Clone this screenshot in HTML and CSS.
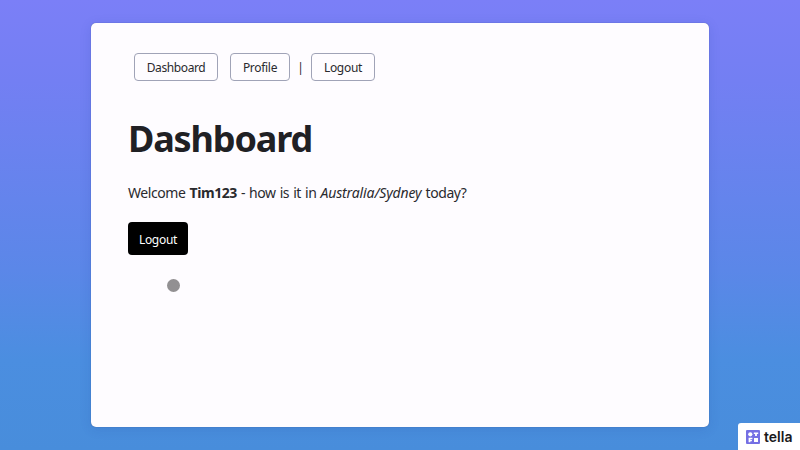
FILE: index.html
```html
<!DOCTYPE html>
<html lang="en">
<head>
<meta charset="utf-8">
<title>Dashboard</title>
<link rel="stylesheet" href="styles.css">
</head>
<body>
<main class="window">
  <nav class="nav">
    <a class="nav-link dashboard">Dashboard</a>
    <a class="nav-link profile">Profile</a>
    <span class="divider">|</span>
    <a class="nav-link logout">Logout</a>
  </nav>
  <h1>Dashboard</h1>
  <p class="welcome">Welcome <strong>Tim123</strong> - how is it in <em>Australia/Sydney</em> today?</p>
  <button class="button">Logout</button>
</main>
<div class="cursor"></div>
<div class="badge">
  <svg class="badge-icon" viewBox="0 0 14 14" aria-hidden="true">
    <rect width="14" height="14" rx="1" fill="#746fe4"/>
    <g fill="#fff">
      <circle cx="4.3" cy="4.3" r="2.1"/>
      <path d="M7.8 2.4h4.4v1.6h-1.3v2h-1.8V4H7.8zM2.6 7.8h3.8v1.5h-2v.8h1.5v1.2H4.4v1H2.6zM8 8h4v4H8z"/>
    </g>
  </svg>
  <span class="badge-name">tella</span>
</div>
</body>
</html>
```
FILE: styles.css
```css
* { box-sizing: border-box; }
body {
  margin: 0;
  height: 450px;
  overflow: hidden;
  padding: 23px 91px;
  background: linear-gradient(#7b7ff7 0%, #737ff3 18%, #5b87e8 60%, #4b8ee0 80%, #488ddb 100%);
  font-family: "Noto Sans", sans-serif;
  color: #2a2a2e;
}
.window {
  height: 404px;
  width: 618px;
  padding: 30px 37px;
  background: #fefcff;
  border-radius: 5px;
  box-shadow: 0 0 1px #34528c, 0 2px 12px rgba(30, 60, 150, .14);
}
.nav {
  display: flex;
  align-items: center;
  height: 28px;
  margin-left: 6px;
  font-size: 12px;
}
.nav-link {
  height: 28px;
  line-height: 27px;
  border: 1px solid #a0a3b7;
  border-radius: 4px;
  text-align: center;
  white-space: nowrap;
  letter-spacing: -.3px;
}
.dashboard { width: 84px; letter-spacing: -.4px; }
.profile { width: 60px; margin-left: 12px; }
.divider { width: 21px; text-align: center; }
.logout { width: 64px; }
h1 {
  margin: 33px 0 0;
  height: 50px;
  line-height: 50px;
  font-size: 36px;
  font-weight: 700;
  letter-spacing: -1.15px;
  color: #202024;
}
.welcome {
  margin: 19px 0 0;
  height: 20px;
  line-height: 20px;
  font-size: 14px;
  letter-spacing: -.42px;
  word-spacing: .8px;
  white-space: nowrap;
}
.welcome em { letter-spacing: -.13px; }
.button {
  display: block;
  width: 60px;
  height: 33px;
  margin-top: 19px;
  padding: 1px 0 0;
  border: 0;
  border-radius: 4px;
  background: #000;
  color: #fff;
  font: 12px "Noto Sans", sans-serif;
  letter-spacing: -.3px;
}
.cursor {
  position: absolute;
  left: 167px;
  top: 279px;
  width: 13px;
  height: 13px;
  border-radius: 50%;
  background: #929092;
}
.badge {
  position: absolute;
  right: 0;
  bottom: 0;
  width: 62px;
  height: 27px;
  display: flex;
  align-items: center;
  gap: 4px;
  padding-left: 8px;
  border-top-left-radius: 3px;
  background: #fff;
}
.badge-icon { width: 14px; height: 14px; }
.badge-name {
  font: 600 14px/20px Inter, sans-serif;
  letter-spacing: 0;
  color: #19191b;
}
```
